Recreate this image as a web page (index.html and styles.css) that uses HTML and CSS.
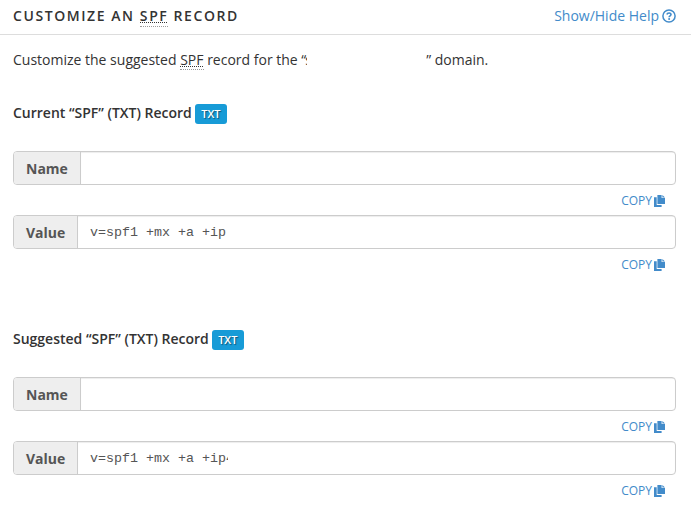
FILE: index.html
```html
<!DOCTYPE html>
<html lang="en">
<head>
<meta charset="utf-8">
<title>Customize an SPF Record</title>
<link rel="stylesheet" href="styles.css">
</head>
<body>
<svg class="defs" width="0" height="0">
  <symbol id="copy" viewBox="0 0 11 12">
    <path d="M3.4 0H7.6V3.1H11V9.1H3.4Z"/>
    <path d="M8.4 0L11 2.4H8.4Z"/>
    <path d="M0 2.2H2.7V9.9H7.6V12H0Z"/>
  </symbol>
</svg>
<header class="header">
  <h2 class="title">CUSTOMIZE AN <abbr>SPF</abbr> RECORD</h2>
  <a class="help">Show/Hide Help
    <svg class="help-icon" viewBox="0 0 14 14"><circle cx="7" cy="7" r="6.1" fill="none" stroke="currentColor" stroke-width="1.5"/><path d="M4.9 5.5C5.3 3.4 9 3.4 9 5.6C9 6.9 7.1 6.8 7.1 8.2" fill="none" stroke="currentColor" stroke-width="1.6"/><circle cx="7.1" cy="10.1" r="1" fill="currentColor"/></svg>
  </a>
</header>
<main class="content">
  <p class="intro">Customize the suggested <abbr>SPF</abbr> record for the “<span class="domain"><span class="domain-text">s</span></span>” domain.</p>
  <section class="record">
    <h3 class="record-title">Current “SPF” (TXT) Record <span class="badge">TXT</span></h3>
    <div class="group"><span class="label name">Name</span><span class="field"></span></div>
    <div class="actions"><a>COPY</a><svg class="copy-icon"><use href="#copy"/></svg></div>
    <div class="group"><span class="label value">Value</span><span class="field">v=spf1 +mx +a +ip</span></div>
    <div class="actions"><a>COPY</a><svg class="copy-icon"><use href="#copy"/></svg></div>
  </section>
  <section class="record">
    <h3 class="record-title">Suggested “SPF” (TXT) Record <span class="badge">TXT</span></h3>
    <div class="group"><span class="label name">Name</span><span class="field"></span></div>
    <div class="actions"><a>COPY</a><svg class="copy-icon"><use href="#copy"/></svg></div>
    <div class="group"><span class="label value">Value</span><span class="field">v=spf1 +mx +a +ip<span class="cut">4</span></span></div>
    <div class="actions"><a>COPY</a><svg class="copy-icon"><use href="#copy"/></svg></div>
  </section>
</main>
</body>
</html>
```
FILE: styles.css
```css
* { box-sizing: border-box; }
body {
  margin: 0;
  background: #fff;
  color: #333;
  font: 14px/20px "Open Sans", sans-serif;
  overflow: hidden;
}
.defs { position: absolute; }
h2, h3, p { margin: 0; }
abbr {
  display: inline-block;
  height: 20px;
  line-height: 20px;
  vertical-align: top;
  border-bottom: 1px dotted #999;
  background: repeating-linear-gradient(90deg, #333 0 1px, transparent 1px 2px) 0 16px / 100% 1px no-repeat;
}
.title abbr { height: 21px; }
.header {
  height: 35px;
  padding: 6px 15px 0 13px;
  display: flex;
  justify-content: space-between;
  align-items: flex-start;
  border-bottom: 1px solid #ddd;
}
.title { font-size: 14px; font-weight: 600; letter-spacing: 1.57px; line-height: 20px; }
a, .actions, .help { color: #428bca; }
.help { display: flex; gap: 3px; align-items: center; height: 20px; }
.help-icon { width: 14px; height: 14px; }
.content { padding: 15px 15px 0 13px; }
.intro { height: 20px; white-space: nowrap; }
.domain {
  display: inline-block;
  width: 120px;
  height: 20px;
  vertical-align: top;
}
.domain-text { display: block; width: 2px; margin-left: -1px; overflow: hidden; }
.record { padding-top: 34px; height: 226px; }
.record-title {
  display: flex;
  align-items: flex-start;
  gap: 3px;
  height: 47px;
  font-size: 14px;
  line-height: 18px;
  font-weight: 600;
}
.badge {
  width: 32px;
  height: 20px;
  border-radius: 3px;
  background: #179bd7;
  color: #fff;
  font-size: 11px;
  line-height: 20px;
  text-align: center;
  text-shadow: 1px 1px 1px rgba(0, 0, 0, .45);
}
.group {
  display: flex;
  height: 34px;
  border: 1px solid #ccc;
  border-radius: 4px;
  overflow: hidden;
}
.label {
  flex: none;
  background: #eee;
  border-right: 1px solid #ccc;
  padding-left: 12px;
  color: #555;
  font-weight: 700;
  line-height: 34px;
}
.name { width: 67px; }
.value { width: 64px; }
.field {
  flex: 1;
  padding-left: 12px;
  color: #555;
  font: 13.333px/34px "Courier New", "Liberation Mono", monospace;
  box-shadow: inset 0 1px 1px rgba(0, 0, 0, .075);
  white-space: pre;
}
.cut { display: inline-block; width: 2px; overflow: hidden; vertical-align: top; }
.actions {
  height: 30px;
  padding: 0 11px 0 0;
  display: flex;
  justify-content: flex-end;
  gap: 2px;
  font-size: 12px;
  line-height: 31px;
}
.copy-icon { width: 11px; height: 12px; margin-top: 10px; fill: currentColor; }
```
